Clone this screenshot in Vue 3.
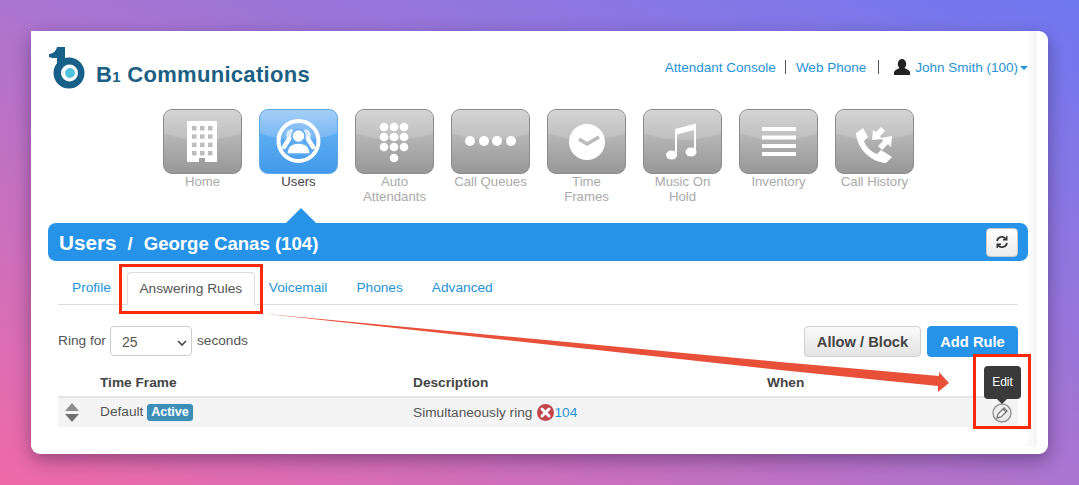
<script setup>
const navItems = [
  { icon: 'home', label: 'Home' },
  { icon: 'users', label: 'Users', active: true },
  { icon: 'dial', label: 'Auto\nAttendants' },
  { icon: 'queues', label: 'Call Queues' },
  { icon: 'clock', label: 'Time\nFrames' },
  { icon: 'music', label: 'Music On\nHold' },
  { icon: 'inventory', label: 'Inventory' },
  { icon: 'history', label: 'Call History' },
]

const tabs = ['Profile', 'Answering Rules', 'Voicemail', 'Phones', 'Advanced']
const dialDots = [
  [29, 18], [39, 18], [49, 18],
  [29, 28], [39, 28], [49, 28],
  [29, 38], [39, 38], [49, 38],
  [39, 49],
]
const windows = [0, 1, 2, 3].flatMap((row) =>
  [0, 1, 2].map((col) => ({ x: 29 + col * 8, y: 17 + row * 8.3 })),
)
</script>

<template>
  <div class="page">
    <div class="card">
      <div class="content">
        <header class="top">
          <div class="brand">
            <svg class="brand__mark" width="38" height="44" viewBox="0 0 38 44">
              <path d="M1 7 C5 7 8 4 9 0 H17 V28 H9 V11 C6 11 3 11 1 10 Z" fill="#17608a" />
              <circle cx="21" cy="26" r="15.500" fill="#17608a" />
              <circle cx="21.500" cy="26" r="8.500" fill="#fff" />
              <circle cx="22" cy="26" r="5" fill="#4fc3dc" />
            </svg>
            <span class="brand__name">B<small>1</small> Communications</span>
          </div>
          <nav class="toplinks">
            <a>Attendant Console</a>
            <i class="bar"></i>
            <a>Web Phone</a>
            <i class="bar bar--wide"></i>
            <svg width="16" height="16" viewBox="0 0 16 16">
              <ellipse cx="8" cy="5" rx="4.200" ry="5" fill="#222" />
              <path d="M0 16 V13 C1 10.500 4 10 5.500 9 H10.500 C12 10 15 10.500 16 13 V16 Z" fill="#222" />
            </svg>
            <a class="user">John Smith (100)<b class="caret"></b></a>
          </nav>
        </header>

        <div class="tiles">
          <div v-for="item in navItems" :key="item.icon" class="tile" :class="{ 'tile--active': item.active }">
            <div class="tile__box">
              <svg width="80" height="65" viewBox="0 0 80 65">
                <template v-if="item.icon === 'home'">
                  <path d="M24 12 H54 V53 H42 V49 H36 V53 H24 Z" fill="#fff" />
                  <rect v-for="(w, i) in windows" :key="i" :x="w.x" :y="w.y" width="4.500" height="4.500" fill="#bdbdbd" />
                </template>
                <template v-else-if="item.icon === 'users'">
                  <circle cx="39.500" cy="32" r="20" fill="none" stroke="#fff" stroke-width="4" />
                  <ellipse cx="31" cy="25" rx="3.500" ry="5" transform="rotate(25 31 25)" fill="#dcebfb" />
                  <ellipse cx="48" cy="25" rx="3.500" ry="5" transform="rotate(-25 48 25)" fill="#dcebfb" />
                  <path d="M25 38 L30 30 M54 38 L49 30" stroke="#fff" stroke-width="4.500" stroke-linecap="round" />
                  <circle cx="39.500" cy="27" r="6.500" fill="#fff" stroke="#62adf2" stroke-width="1.500" />
                  <path d="M28 45 C28 37 33 34 39.500 34 C46 34 51 37 51 45 Z" fill="#fff" stroke="#62adf2" stroke-width="1.500" />
                </template>
                <template v-else-if="item.icon === 'dial'">
                  <circle v-for="(d, i) in dialDots" :key="i" :cx="d[0]" :cy="d[1]" r="4.300" fill="#fff" />
                </template>
                <template v-else-if="item.icon === 'queues'">
                  <circle v-for="x in [19, 33, 46, 60]" :key="x" :cx="x" cy="32" r="5" fill="#fff" />
                </template>
                <template v-else-if="item.icon === 'clock'">
                  <circle cx="40" cy="33" r="18" fill="#fff" />
                  <path d="M32 30 L40 35 L52 28" fill="none" stroke="#bbb" stroke-width="3.500" />
                </template>
                <template v-else-if="item.icon === 'music'">
                  <ellipse cx="28.500" cy="46" rx="5.500" ry="4.500" fill="#fff" />
                  <ellipse cx="48" cy="43" rx="5.500" ry="4.500" fill="#fff" />
                  <path d="M32 46 V20 L53 14.500 V43 H51 V21 L34 25.500 V46 Z" fill="#fff" />
                </template>
                <template v-else-if="item.icon === 'inventory'">
                  <rect v-for="y in [18, 26.500, 35, 43]" :key="y" x="23" :y="y" width="34" height="4" fill="#fff" />
                </template>
                <template v-else>
                  <path d="M21 24 L28 19 L33 28 L29 32 C31 38 36 43 42 45 L46 41 L57 48 L51 54 C36 53 22 40 21 24 Z" fill="#fff" />
                  <path d="M46 18 L50 22 L45 27 L47 30 L37 31 L38 21 L41 23 Z" fill="#fff" />
                  <path d="M47 41 L43 37 L48 32 L46 29 L57 27 L56 38 L53 35 Z" fill="#fff" />
                </template>
              </svg>
            </div>
            <div class="tile__label">{{ item.label }}</div>
          </div>
        </div>

        <div class="titlebar">
          <b class="titlebar__notch"></b>
          <h1><span>Users</span><em>/</em>George Canas (104)</h1>
          <button class="refresh" type="button">
            <svg width="14" height="14" viewBox="0 0 14 14" fill="none" stroke="#333" stroke-width="1.700">
              <path d="M2 6 A5 5 0 0 1 11 4" />
              <path d="M12 8 A5 5 0 0 1 3 10" />
              <path d="M11.800 1 V4.800 H8" stroke-width="1.400" />
              <path d="M2.200 13 V9.200 H6" stroke-width="1.400" />
            </svg>
          </button>
        </div>

        <div class="tabs">
          <a v-for="tab in tabs" :key="tab" class="tab" :class="{ 'tab--on': tab === 'Answering Rules' }">{{ tab }}</a>
        </div>

        <div class="controls">
          <span>Ring for</span>
          <div class="pick">
            <select>
              <option>25</option>
            </select>
            <svg width="10" height="6" viewBox="0 0 10 6"><path d="M1 1 L5 5 L9 1" fill="none" stroke="#444" stroke-width="1.600" /></svg>
          </div>
          <span>seconds</span>
          <div class="controls__btns">
            <button class="btn" type="button">Allow / Block</button>
            <button class="btn btn--blue" type="button">Add Rule</button>
          </div>
        </div>

        <div class="rules">
          <div class="rules__head">
            <span></span>
            <span>Time Frame</span>
            <span>Description</span>
            <span>When</span>
            <span></span>
          </div>
          <div class="rules__row">
            <svg class="sorter" width="14" height="20" viewBox="0 0 14 20">
              <path d="M7 0 L14 8 H0 Z" fill="#8f8f8f" />
              <path d="M0 11 H14 L7 19 Z" fill="#6f6f6f" />
            </svg>
            <span>Default <b class="badge">Active</b></span>
            <span class="desc">
              Simultaneously ring
              <svg width="17" height="17" viewBox="0 0 17 17">
                <circle cx="8.500" cy="8.500" r="8.500" fill="#c1454a" />
                <path d="M5 5 L12 12 M12 5 L5 12" stroke="#fff" stroke-width="3" stroke-linecap="round" />
              </svg><a>104</a>
            </span>
            <span></span>
            <div class="edit">
              <div class="tip">Edit</div>
              <svg width="20" height="20" viewBox="0 0 20 20">
                <circle cx="10" cy="10" r="9" fill="#ececec" stroke="#999" stroke-width="1.500" />
                <path d="M5 15 L6 11 L12 5 L15 8 L9 14 Z" fill="#fff" stroke="#777" stroke-width="1.300" />
                <path d="M11 6 L14 9" stroke="#777" stroke-width="1.300" />
              </svg>
            </div>
          </div>
        </div>
      </div>
    </div>

    <svg class="arrow" width="1079" height="485" viewBox="0 0 1079 485">
      <path d="M262 313.500 L780 362 L939 376 L939 372 L949 383 L938 392 L938 386 L780 370 Z" fill="#e8503a" />
    </svg>
    <div class="mark mark--tab"></div>
    <div class="mark mark--edit"></div>
  </div>
</template>

<style>
body {
  margin: 0;
}
</style>

<style scoped>
.page {
  position: relative;
  width: 1079px;
  height: 485px;
  box-sizing: border-box;
  padding: 31px;
  overflow: hidden;
  background: linear-gradient(to top right, #f06aa8 0%, #ab74cf 50%, #6f78f2 100%);
  font-family: "Liberation Sans", Arial, sans-serif;
  font-size: 13.700px;
  color: #555;
}

.card {
  position: relative;
  width: 1017px;
  height: 423px;
  border-radius: 9px;
  background: #fff;
  box-shadow: 0 6px 18px rgba(40, 20, 60, 0.42);
}

.content {
  position: relative;
  width: 1006px;
  height: 416px;
  box-sizing: border-box;
  padding: 0 0 0 17px;
  background: linear-gradient(to right, #fff 98.800%, #f4f4f4 100%);
}

a {
  color: #1f93d6;
}

.top {
  display: flex;
  justify-content: space-between;
  height: 78px;
  width: 980px;
}

.brand {
  display: flex;
  align-items: flex-start;
  padding-top: 16px;
}

.brand__name {
  margin: 15px 0 0 10px;
  font-size: 22px;
  font-weight: 700;
  color: #1b5f84;
  letter-spacing: 0.300px;
}

.brand__name small {
  font-size: 15px;
}

.toplinks {
  display: flex;
  align-items: center;
  height: 18px;
  margin-top: 27px;
  font-size: 13.500px;
}

.bar {
  width: 1px;
  height: 14px;
  margin: 0 10px 0 9px;
  background: #555;
}

.bar--wide {
  margin: 0 15px 0 12px;
}

.user {
  margin-left: 5px;
}

.caret {
  display: inline-block;
  margin-left: 2px;
  vertical-align: middle;
  border: 4px solid transparent;
  border-top-color: #1f93d6;
  border-bottom: 0;
}

.tiles {
  display: flex;
  gap: 17px;
  height: 114px;
  padding-left: 115px;
}

.tile {
  width: 79px;
  text-align: center;
}

.tile__box {
  position: relative;
  height: 65px;
  box-sizing: border-box;
  border-radius: 9px;
  border: 1px solid #8c8c8c;
  overflow: hidden;
  background: linear-gradient(#b6b6b6 40%, #979797);
}

.tile__box::before {
  content: "";
  position: absolute;
  left: -30px;
  right: -30px;
  top: -48px;
  height: 78px;
  border-radius: 50%;
  background: linear-gradient(#d8d8d8 55%, #bebebe);
}

.tile__box svg {
  position: absolute;
  left: -1px;
  top: -1px;
}

.tile--active .tile__box {
  border-color: #5ea9ec;
  background: linear-gradient(#5cacf1 40%, #429aeb);
}

.tile--active .tile__box::before {
  background: linear-gradient(#b2d6f8 50%, #74b6f3);
}

.tile__label {
  font-size: 13.200px;
  line-height: 15px;
  color: #aaa;
  white-space: pre-line;
}

.tile--active .tile__label {
  color: #444;
}

.titlebar {
  position: relative;
  display: flex;
  align-items: center;
  justify-content: space-between;
  width: 980px;
  height: 38px;
  box-sizing: border-box;
  padding: 0 10px 0 11px;
  border-radius: 8px;
  background: #2793e8;
  color: #fff;
}

.titlebar__notch {
  position: absolute;
  left: 238px;
  top: -15px;
  border: 15px solid transparent;
  border-top: 0;
  border-bottom-color: #2793e8;
}

.titlebar h1 {
  margin: 0;
  padding-top: 1px;
  font-size: 18.600px;
  font-weight: 700;
}

.titlebar h1 span {
  font-size: 20.700px;
}

.titlebar h1 em {
  margin: 0 11px;
  font-style: normal;
}

.refresh {
  display: flex;
  align-items: center;
  justify-content: center;
  width: 32px;
  height: 29px;
  padding: 0;
  border: 1px solid #c9c9c9;
  border-radius: 4px;
  background: linear-gradient(#fff, #ececec);
}

.tabs {
  display: flex;
  align-items: flex-end;
  width: 960px;
  height: 44px;
  box-sizing: border-box;
  margin-left: 10px;
  padding-left: 0;
  border-bottom: 1px solid #ddd;
}

.tab {
  height: 33px;
  box-sizing: border-box;
  padding: 9px 15px 0 14px;
  line-height: 16px;
}

.tab--on {
  width: 128px;
  margin: 0 0 -1px 1px;
  padding: 8px 0 0;
  border: 1px solid #ddd;
  border-bottom-color: #fff;
  border-radius: 4px 4px 0 0;
  background: #fff;
  color: #555;
  text-align: center;
}

.controls {
  display: flex;
  align-items: flex-start;
  gap: 5px;
  width: 960px;
  margin: 21px 0 0 10px;
  line-height: 30px;
}

.pick {
  position: relative;
  width: 82px;
  height: 30px;
  margin-left: -1px;
}

.pick select {
  width: 100%;
  height: 100%;
  padding: 2px 0 0 11px;
  border: 1px solid #ccc;
  border-radius: 4px;
  background: #fff;
  color: #555;
  font: 14px "Liberation Sans", Arial, sans-serif;
  appearance: none;
}

.pick svg {
  position: absolute;
  right: 5px;
  top: 14px;
}

.controls__btns {
  display: flex;
  gap: 6px;
  margin-left: auto;
}

.btn {
  width: 117px;
  height: 31px;
  padding: 0;
  border: 1px solid #d0d0d0;
  border-radius: 4px;
  background: linear-gradient(#fafafa, #e4e4e4);
  color: #444;
  font: 700 14.700px "Liberation Sans", Arial, sans-serif;
}

.btn--blue {
  width: 91px;
  border-color: #2793e8;
  background: #2793e8;
  color: #fff;
}

.rules {
  width: 960px;
  margin: 10px 0 0 10px;
}

.rules__head,
.rules__row {
  display: grid;
  grid-template-columns: 42px 313px 354px 1fr 32px;
  align-items: center;
}

.rules__head {
  height: 31px;
  box-sizing: border-box;
  padding-top: 2px;
  border-bottom: 2px solid #e6e6e6;
  font-weight: 700;
  color: #444;
}

.rules__row {
  height: 29px;
  background: #f4f4f4;
}

.sorter {
  margin-left: 7px;
}

.badge {
  display: inline-block;
  padding: 1px 4px;
  border-radius: 3px;
  background: #3d8fb8;
  color: #fff;
  font-size: 12.500px;
  line-height: 15px;
}

.desc {
  display: flex;
  align-items: center;
  gap: 5px;
}

.desc a {
  margin-left: -5px;
}

.edit {
  position: relative;
  display: flex;
  justify-content: center;
}

.tip {
  position: absolute;
  left: -2px;
  top: -37px;
  width: 37px;
  height: 33px;
  border-radius: 4px;
  background: #3a3a3a;
  color: #fff;
  font-size: 12px;
  line-height: 33px;
  text-align: center;
}

.tip::after {
  content: "";
  position: absolute;
  left: 13px;
  bottom: -5px;
  border: 5px solid transparent;
  border-top-color: #3a3a3a;
  border-bottom: 0;
}

.arrow {
  position: absolute;
  left: 0;
  top: 0;
  pointer-events: none;
}

.mark {
  position: absolute;
  box-sizing: border-box;
  border: 3px solid #fb2a06;
}

.mark--tab {
  left: 119px;
  top: 264px;
  width: 144px;
  height: 50px;
}

.mark--edit {
  left: 973px;
  top: 354px;
  width: 58px;
  height: 75px;
}
</style>
